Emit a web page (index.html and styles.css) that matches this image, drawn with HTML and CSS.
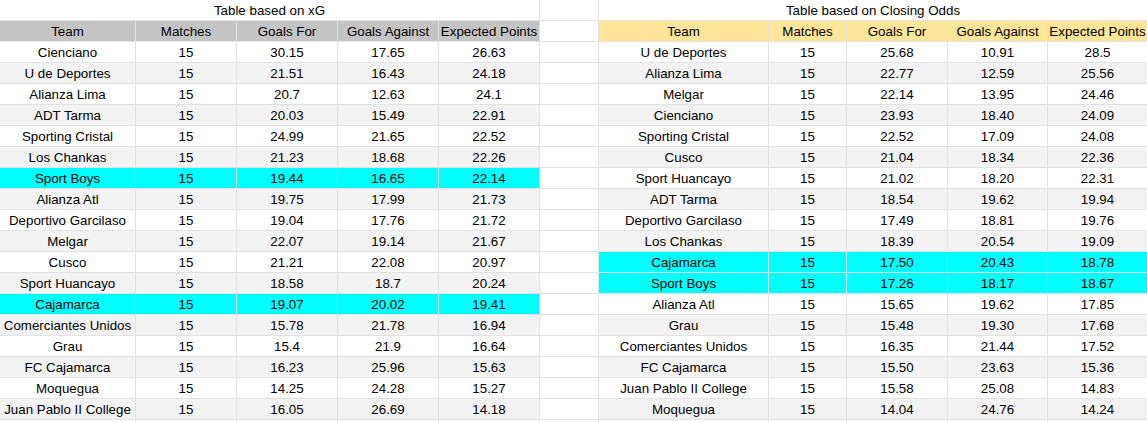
FILE: index.html
```html
<!DOCTYPE html>
<html>
<head>
<meta charset="utf-8">
<link rel="stylesheet" href="styles.css">
</head>
<body>
<div class="sheet">
  <div class="row">
    <div class="half left"><div class="c title">Table based on xG</div></div>
    <div class="c gap"></div>
    <div class="half right"><div class="c title">Table based on Closing Odds</div></div>
  </div>
  <div class="row">
    <div class="half left head-gray">
      <div class="c">Team</div><div class="c">Matches</div><div class="c">Goals For</div><div class="c">Goals Against</div><div class="c">Expected Points</div>
    </div>
    <div class="c gap"></div>
    <div class="half right head-yellow">
      <div class="c">Team</div><div class="c">Matches</div><div class="c">Goals For</div><div class="c">Goals Against</div><div class="c">Expected Points</div>
    </div>
  </div>

  <div class="row">
    <div class="half left"><div class="c">Cienciano</div><div class="c">15</div><div class="c">30.15</div><div class="c">17.65</div><div class="c">26.63</div></div>
    <div class="c gap"></div>
    <div class="half right"><div class="c">U de Deportes</div><div class="c">15</div><div class="c">25.68</div><div class="c">10.91</div><div class="c">28.5</div></div>
  </div>
  <div class="row alt">
    <div class="half left"><div class="c">U de Deportes</div><div class="c">15</div><div class="c">21.51</div><div class="c">16.43</div><div class="c">24.18</div></div>
    <div class="c gap"></div>
    <div class="half right"><div class="c">Alianza Lima</div><div class="c">15</div><div class="c">22.77</div><div class="c">12.59</div><div class="c">25.56</div></div>
  </div>
  <div class="row">
    <div class="half left"><div class="c">Alianza Lima</div><div class="c">15</div><div class="c">20.7</div><div class="c">12.63</div><div class="c">24.1</div></div>
    <div class="c gap"></div>
    <div class="half right"><div class="c">Melgar</div><div class="c">15</div><div class="c">22.14</div><div class="c">13.95</div><div class="c">24.46</div></div>
  </div>
  <div class="row alt">
    <div class="half left"><div class="c">ADT Tarma</div><div class="c">15</div><div class="c">20.03</div><div class="c">15.49</div><div class="c">22.91</div></div>
    <div class="c gap"></div>
    <div class="half right"><div class="c">Cienciano</div><div class="c">15</div><div class="c">23.93</div><div class="c">18.40</div><div class="c">24.09</div></div>
  </div>
  <div class="row">
    <div class="half left"><div class="c">Sporting Cristal</div><div class="c">15</div><div class="c">24.99</div><div class="c">21.65</div><div class="c">22.52</div></div>
    <div class="c gap"></div>
    <div class="half right"><div class="c">Sporting Cristal</div><div class="c">15</div><div class="c">22.52</div><div class="c">17.09</div><div class="c">24.08</div></div>
  </div>
  <div class="row alt">
    <div class="half left"><div class="c">Los Chankas</div><div class="c">15</div><div class="c">21.23</div><div class="c">18.68</div><div class="c">22.26</div></div>
    <div class="c gap"></div>
    <div class="half right"><div class="c">Cusco</div><div class="c">15</div><div class="c">21.04</div><div class="c">18.34</div><div class="c">22.36</div></div>
  </div>
  <div class="row">
    <div class="half left hl"><div class="c">Sport Boys</div><div class="c">15</div><div class="c">19.44</div><div class="c">16.65</div><div class="c">22.14</div></div>
    <div class="c gap"></div>
    <div class="half right"><div class="c">Sport Huancayo</div><div class="c">15</div><div class="c">21.02</div><div class="c">18.20</div><div class="c">22.31</div></div>
  </div>
  <div class="row alt">
    <div class="half left"><div class="c">Alianza Atl</div><div class="c">15</div><div class="c">19.75</div><div class="c">17.99</div><div class="c">21.73</div></div>
    <div class="c gap"></div>
    <div class="half right"><div class="c">ADT Tarma</div><div class="c">15</div><div class="c">18.54</div><div class="c">19.62</div><div class="c">19.94</div></div>
  </div>
  <div class="row">
    <div class="half left"><div class="c">Deportivo Garcilaso</div><div class="c">15</div><div class="c">19.04</div><div class="c">17.76</div><div class="c">21.72</div></div>
    <div class="c gap"></div>
    <div class="half right"><div class="c">Deportivo Garcilaso</div><div class="c">15</div><div class="c">17.49</div><div class="c">18.81</div><div class="c">19.76</div></div>
  </div>
  <div class="row alt">
    <div class="half left"><div class="c">Melgar</div><div class="c">15</div><div class="c">22.07</div><div class="c">19.14</div><div class="c">21.67</div></div>
    <div class="c gap"></div>
    <div class="half right"><div class="c">Los Chankas</div><div class="c">15</div><div class="c">18.39</div><div class="c">20.54</div><div class="c">19.09</div></div>
  </div>
  <div class="row">
    <div class="half left"><div class="c">Cusco</div><div class="c">15</div><div class="c">21.21</div><div class="c">22.08</div><div class="c">20.97</div></div>
    <div class="c gap"></div>
    <div class="half right hl"><div class="c">Cajamarca</div><div class="c">15</div><div class="c">17.50</div><div class="c">20.43</div><div class="c">18.78</div></div>
  </div>
  <div class="row alt">
    <div class="half left"><div class="c">Sport Huancayo</div><div class="c">15</div><div class="c">18.58</div><div class="c">18.7</div><div class="c">20.24</div></div>
    <div class="c gap"></div>
    <div class="half right hl"><div class="c">Sport Boys</div><div class="c">15</div><div class="c">17.26</div><div class="c">18.17</div><div class="c">18.67</div></div>
  </div>
  <div class="row">
    <div class="half left hl"><div class="c">Cajamarca</div><div class="c">15</div><div class="c">19.07</div><div class="c">20.02</div><div class="c">19.41</div></div>
    <div class="c gap"></div>
    <div class="half right"><div class="c">Alianza Atl</div><div class="c">15</div><div class="c">15.65</div><div class="c">19.62</div><div class="c">17.85</div></div>
  </div>
  <div class="row alt">
    <div class="half left"><div class="c">Comerciantes Unidos</div><div class="c">15</div><div class="c">15.78</div><div class="c">21.78</div><div class="c">16.94</div></div>
    <div class="c gap"></div>
    <div class="half right"><div class="c">Grau</div><div class="c">15</div><div class="c">15.48</div><div class="c">19.30</div><div class="c">17.68</div></div>
  </div>
  <div class="row">
    <div class="half left"><div class="c">Grau</div><div class="c">15</div><div class="c">15.4</div><div class="c">21.9</div><div class="c">16.64</div></div>
    <div class="c gap"></div>
    <div class="half right"><div class="c">Comerciantes Unidos</div><div class="c">15</div><div class="c">16.35</div><div class="c">21.44</div><div class="c">17.52</div></div>
  </div>
  <div class="row alt">
    <div class="half left"><div class="c">FC Cajamarca</div><div class="c">15</div><div class="c">16.23</div><div class="c">25.96</div><div class="c">15.63</div></div>
    <div class="c gap"></div>
    <div class="half right"><div class="c">FC Cajamarca</div><div class="c">15</div><div class="c">15.50</div><div class="c">23.63</div><div class="c">15.36</div></div>
  </div>
  <div class="row">
    <div class="half left"><div class="c">Moquegua</div><div class="c">15</div><div class="c">14.25</div><div class="c">24.28</div><div class="c">15.27</div></div>
    <div class="c gap"></div>
    <div class="half right"><div class="c">Juan Pablo II College</div><div class="c">15</div><div class="c">15.58</div><div class="c">25.08</div><div class="c">14.83</div></div>
  </div>
  <div class="row alt">
    <div class="half left"><div class="c">Juan Pablo II College</div><div class="c">15</div><div class="c">16.05</div><div class="c">26.69</div><div class="c">14.18</div></div>
    <div class="c gap"></div>
    <div class="half right"><div class="c">Moquegua</div><div class="c">15</div><div class="c">14.04</div><div class="c">24.76</div><div class="c">14.24</div></div>
  </div>
  <div class="row">
    <div class="half left"><div class="c"></div><div class="c"></div><div class="c"></div><div class="c"></div><div class="c"></div></div>
    <div class="c gap"></div>
    <div class="half right"><div class="c"></div><div class="c"></div><div class="c"></div><div class="c"></div><div class="c"></div></div>
  </div>
</div>
</body>
</html>
```

FILE: styles.css
```css
html, body {
  margin: 0;
  padding: 0;
  overflow: hidden;
  background: #ffffff;
}

.sheet {
  display: flex;
  flex-direction: column;
  width: 1148px;
  font-family: "Liberation Sans", Arial, sans-serif;
  font-size: 13.33px;
  color: #000;
}

.row {
  display: flex;
  height: 21px;
  flex: none;
}

.half {
  display: flex;
  background: #ffffff;
}

.row.alt .half {
  background: #f3f3f3;
}

.half.hl,
.row.alt .half.hl {
  background: #00ffff;
}

.half.head-gray {
  background: #c4c4c4;
}

.half.head-yellow {
  background: #ffe599;
}

.c {
  box-sizing: border-box;
  height: 21px;
  border-right: 1px solid #e2e2e2;
  border-bottom: 1px solid #e2e2e2;
  display: flex;
  align-items: center;
  justify-content: center;
  white-space: nowrap;
  overflow: hidden;
  line-height: 20px;
  padding-top: 1px;
}

.left { width: 540px; }
.left .c:nth-child(1) { width: 136px; }
.left .c:nth-child(n+2) { width: 101px; }

.gap { width: 59px; background: #ffffff; }

.right { width: 549px; }
.right .c:nth-child(1) { width: 170px; }
.right .c:nth-child(2) { width: 78px; }
.right .c:nth-child(3) { width: 101px; }
.right .c:nth-child(4) { width: 100px; }
.right .c:nth-child(5) { width: 100px; }

.c.title {
  background: #ffffff;
}
.left .c.title { width: 540px; }
.right .c.title { width: 549px; }
```
